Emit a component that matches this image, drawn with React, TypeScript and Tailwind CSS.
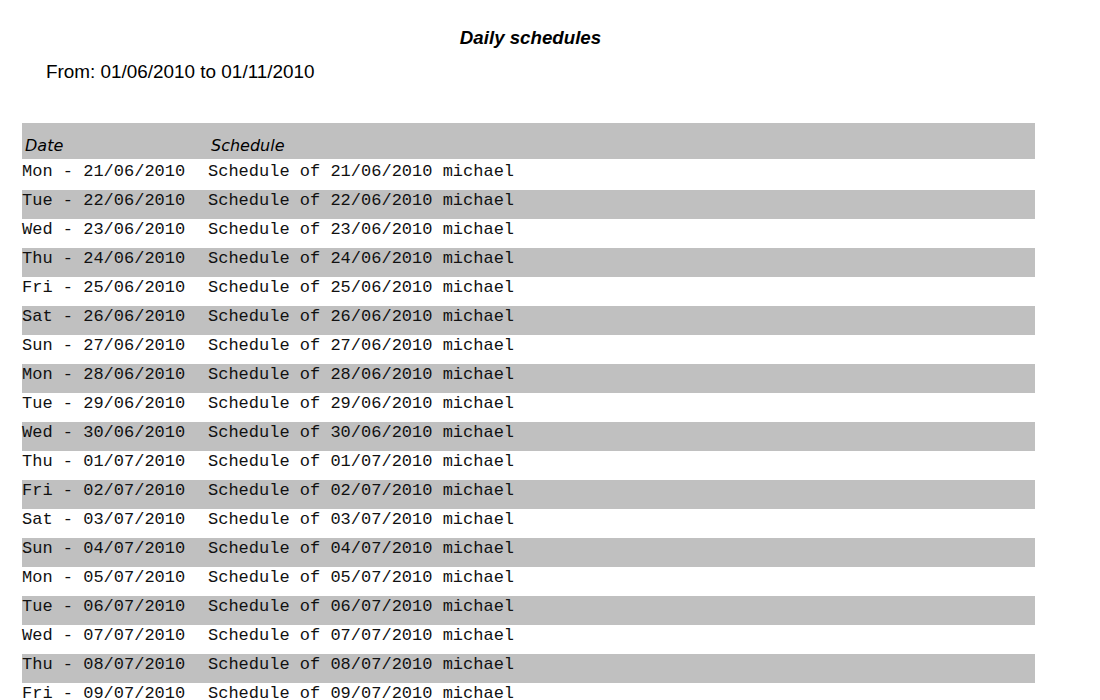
import React from "react"

const DAYS = ["Sun", "Mon", "Tue", "Wed", "Thu", "Fri", "Sat"]

function pad(n: number) {
  return n < 10 ? `0${n}` : `${n}`
}

// build the list of days shown in the report, starting at 21/06/2010
function buildRows(count: number) {
  const rows: { day: string; date: string }[] = []
  const start = Date.UTC(2010, 5, 21)
  for (let i = 0; i < count; i++) {
    const d = new Date(start + i * 86400000)
    const date = `${pad(d.getUTCDate())}/${pad(d.getUTCMonth() + 1)}/${d.getUTCFullYear()}`
    rows.push({ day: DAYS[d.getUTCDay()], date })
  }
  return rows
}

const sans = "font-['Liberation_Sans',Arial,sans-serif]"
const mono = "font-['Liberation_Mono','Courier_New',monospace]"

export default function App() {
  const rows = buildRows(19)

  return (
    <div className="h-[700px] w-[1100px] overflow-hidden bg-white text-black">
      <div className="w-[1035px] pl-[22px]">
        <div className={`mt-[27px] h-[22px] pl-[4px] text-center text-[18.7px] font-bold italic leading-[22px] ${sans}`}>
          Daily schedules
        </div>
        <div className={`mt-[12px] h-[22px] pl-[24px] text-[18.9px] leading-[22px] ${sans}`}>
          From: 01/06/2010 to 01/11/2010
        </div>

        <div className="mt-[40px]">
          <div className="flex h-[36px] bg-[#c0c0c0] pt-[14px] font-['DejaVu_Sans',Verdana,sans-serif] text-[16px] italic leading-[18px]">
            <div className="w-[186px] pl-[3px]">Date</div>
            <div className="pl-[3px]">Schedule</div>
          </div>
          <div className="h-[2px]" />
          {rows.map((r, i) => (
            <div
              key={r.date}
              className={`flex h-[29px] pt-[2px] text-[17px] leading-[18px] text-[#111] ${mono} ${
                i % 2 === 1 ? "bg-[#c0c0c0]" : "bg-white"
              }`}
            >
              <div className="w-[186px] whitespace-pre">{`${r.day} - ${r.date}`}</div>
              <div className="whitespace-pre">{`Schedule of ${r.date} michael`}</div>
            </div>
          ))}
        </div>
      </div>
    </div>
  )
}
